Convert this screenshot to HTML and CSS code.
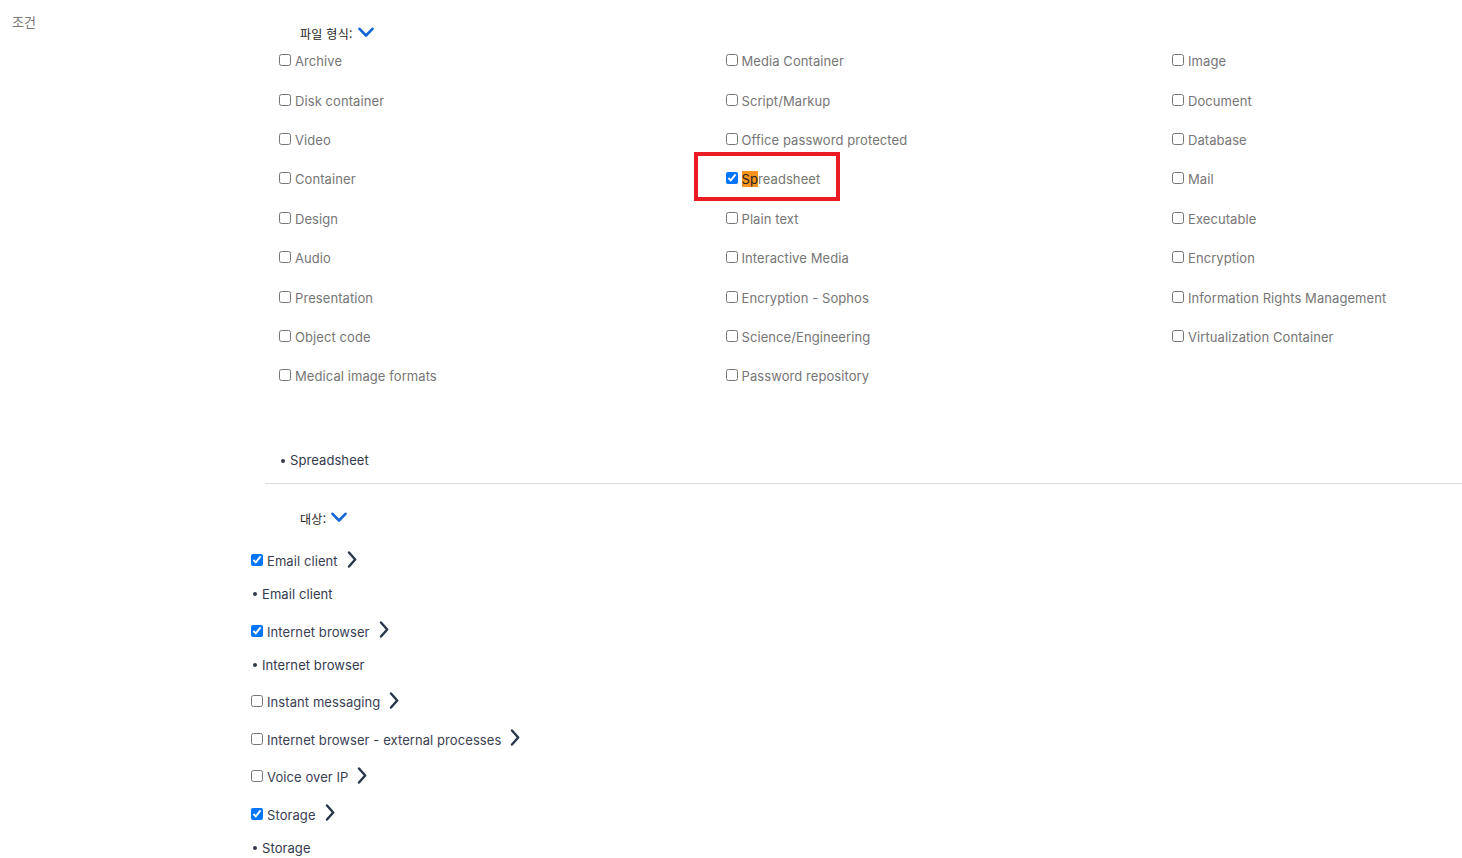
FILE: index.html
```html
<!DOCTYPE html>
<html lang="ko">
<head>
<meta charset="utf-8">
<title>조건</title>
<link rel="stylesheet" href="styles.css">
</head>
<body>
<div class="page">
  <div class="side-label">조건</div>
  <div class="content">
    <section class="filetypes">
      <div class="heading">파일 형식: <svg class="chev-down" viewBox="0 0 16 11" width="16" height="11"><path d="M1.5 1.8 L8 8.5 L14.5 1.8" fill="none" stroke="#1565d8" stroke-width="2.6" stroke-linecap="round" stroke-linejoin="round"/></svg></div>
      <div class="grid">
        <label class="opt"><input type="checkbox"><span>Archive</span></label>
        <label class="opt"><input type="checkbox"><span>Media Container</span></label>
        <label class="opt"><input type="checkbox"><span>Image</span></label>
        <label class="opt"><input type="checkbox"><span>Disk container</span></label>
        <label class="opt"><input type="checkbox"><span>Script/Markup</span></label>
        <label class="opt"><input type="checkbox"><span>Document</span></label>
        <label class="opt"><input type="checkbox"><span>Video</span></label>
        <label class="opt"><input type="checkbox"><span>Office password protected</span></label>
        <label class="opt"><input type="checkbox"><span>Database</span></label>
        <label class="opt"><input type="checkbox"><span>Container</span></label>
        <label class="opt checked-cell"><input type="checkbox" checked><span><mark class="hl">Sp</mark>readsheet</span><span class="redbox"></span></label>
        <label class="opt"><input type="checkbox"><span>Mail</span></label>
        <label class="opt"><input type="checkbox"><span>Design</span></label>
        <label class="opt"><input type="checkbox"><span>Plain text</span></label>
        <label class="opt"><input type="checkbox"><span>Executable</span></label>
        <label class="opt"><input type="checkbox"><span>Audio</span></label>
        <label class="opt"><input type="checkbox"><span>Interactive Media</span></label>
        <label class="opt"><input type="checkbox"><span>Encryption</span></label>
        <label class="opt"><input type="checkbox"><span>Presentation</span></label>
        <label class="opt"><input type="checkbox"><span>Encryption - Sophos</span></label>
        <label class="opt"><input type="checkbox"><span>Information Rights Management</span></label>
        <label class="opt"><input type="checkbox"><span>Object code</span></label>
        <label class="opt"><input type="checkbox"><span>Science/Engineering</span></label>
        <label class="opt"><input type="checkbox"><span>Virtualization Container</span></label>
        <label class="opt"><input type="checkbox"><span>Medical image formats</span></label>
        <label class="opt"><input type="checkbox"><span>Password repository</span></label>
      </div>
      <ul class="selected-list first">
        <li>Spreadsheet</li>
      </ul>
    </section>
    <section class="targets">
      <div class="heading">대상: <svg class="chev-down" viewBox="0 0 16 11" width="16" height="11"><path d="M1.5 1.8 L8 8.5 L14.5 1.8" fill="none" stroke="#1565d8" stroke-width="2.6" stroke-linecap="round" stroke-linejoin="round"/></svg></div>
      <div class="target">
        <label class="trow"><input type="checkbox" checked><span>Email client</span></label><svg class="chev-right" viewBox="0 0 10 17" width="10" height="17"><path d="M2 1.5 L8.2 8.5 L2 15.5" fill="none" stroke="#27364a" stroke-width="2.4" stroke-linecap="round" stroke-linejoin="round"/></svg>
        <div class="bullet">Email client</div>
      </div>
      <div class="target">
        <label class="trow"><input type="checkbox" checked><span>Internet browser</span></label><svg class="chev-right" viewBox="0 0 10 17" width="10" height="17"><path d="M2 1.5 L8.2 8.5 L2 15.5" fill="none" stroke="#27364a" stroke-width="2.4" stroke-linecap="round" stroke-linejoin="round"/></svg>
        <div class="bullet">Internet browser</div>
      </div>
      <div class="target">
        <label class="trow"><input type="checkbox"><span>Instant messaging</span></label><svg class="chev-right" viewBox="0 0 10 17" width="10" height="17"><path d="M2 1.5 L8.2 8.5 L2 15.5" fill="none" stroke="#27364a" stroke-width="2.4" stroke-linecap="round" stroke-linejoin="round"/></svg>
      </div>
      <div class="target">
        <label class="trow"><input type="checkbox"><span>Internet browser - external processes</span></label><svg class="chev-right" viewBox="0 0 10 17" width="10" height="17"><path d="M2 1.5 L8.2 8.5 L2 15.5" fill="none" stroke="#27364a" stroke-width="2.4" stroke-linecap="round" stroke-linejoin="round"/></svg>
      </div>
      <div class="target">
        <label class="trow"><input type="checkbox"><span>Voice over IP</span></label><svg class="chev-right" viewBox="0 0 10 17" width="10" height="17"><path d="M2 1.5 L8.2 8.5 L2 15.5" fill="none" stroke="#27364a" stroke-width="2.4" stroke-linecap="round" stroke-linejoin="round"/></svg>
      </div>
      <div class="target">
        <label class="trow"><input type="checkbox" checked><span>Storage</span></label><svg class="chev-right" viewBox="0 0 10 17" width="10" height="17"><path d="M2 1.5 L8.2 8.5 L2 15.5" fill="none" stroke="#27364a" stroke-width="2.4" stroke-linecap="round" stroke-linejoin="round"/></svg>
        <div class="bullet">Storage</div>
      </div>
    </section>
  </div>
</div>
</body>
</html>
```
FILE: styles.css
```css
html, body {
  margin: 0;
  padding: 0;
  background: #fff;
  overflow: hidden;
}
body {
  font-family: Inter, "Noto Sans CJK KR", sans-serif;
  font-size: 13px;
  color: #333;
  letter-spacing: 0.08px;
}
.page {
  display: flex;
  align-items: flex-start;
}
.side-label {
  width: 251px;
  flex: none;
  box-sizing: border-box;
  padding: 13px 0 0 12px;
  font-size: 13px;
  line-height: 18px;
  color: #777;
  font-family: "Noto Sans CJK KR", sans-serif;
}
.content {
  flex: 1;
  min-width: 0;
}
.heading {
  display: flex;
  align-items: center;
  gap: 5px;
  font-family: "Noto Sans CJK KR", sans-serif;
  font-size: 12px;
  color: #222;
  line-height: 16px;
  letter-spacing: 0.3px;
}
.chev-down {
  display: block;
  margin-top: -3px;
}
.filetypes {
  padding-top: 26px;
}
.filetypes .heading {
  padding-left: 49px;
}
.grid {
  margin-left: 28px;
  margin-top: -0.5px;
  display: grid;
  grid-template-columns: repeat(3, 446.5px);
  grid-auto-rows: 39.4px;
  width: 1340px;
}
.opt {
  display: flex;
  align-items: center;
  color: #767676;
  line-height: 18px;
  position: relative;
  align-self: center;
  justify-self: start;
}
.opt input {
  margin: 0 4px 2px 0;
  width: 12px;
  height: 12px;
}
.hl {
  background: #f7931e;
  color: #222;
  padding: 0;
}
.redbox {
  position: absolute;
  left: -32px;
  top: -18px;
  width: 146px;
  height: 49px;
  border: 4px solid #ec1c24;
  box-sizing: border-box;
  pointer-events: none;
}
.selected-list {
  list-style: none;
  margin: 55px 0 0 14px;
  padding: 0 0 14px 25px;
  border-bottom: 1px solid #dcdcdc;
}
.selected-list li,
.bullet {
  position: relative;
  color: #333a4d;
  line-height: 18px;
}
.selected-list li::before,
.bullet::before {
  content: "";
  position: absolute;
  left: -9px;
  top: 8px;
  width: 4px;
  height: 4px;
  border-radius: 50%;
  background: #333a4d;
}
.targets {
  padding-top: 27px;
}
.targets .heading {
  padding-left: 49px;
  margin-bottom: 24px;
}
.target {
  margin-bottom: 17.5px;
}
.trow {
  display: inline-flex;
  align-items: center;
  color: #3a4053;
  line-height: 20px;
  vertical-align: middle;
}
.trow input {
  margin: 0 4px 2px 0;
  width: 12px;
  height: 12px;
}
.chev-right {
  display: inline-block;
  vertical-align: middle;
  margin-left: 9px;
  margin-top: -4px;
}
.bullet {
  margin-top: 13px;
  margin-left: 11px;
  line-height: 20px;
}
```
